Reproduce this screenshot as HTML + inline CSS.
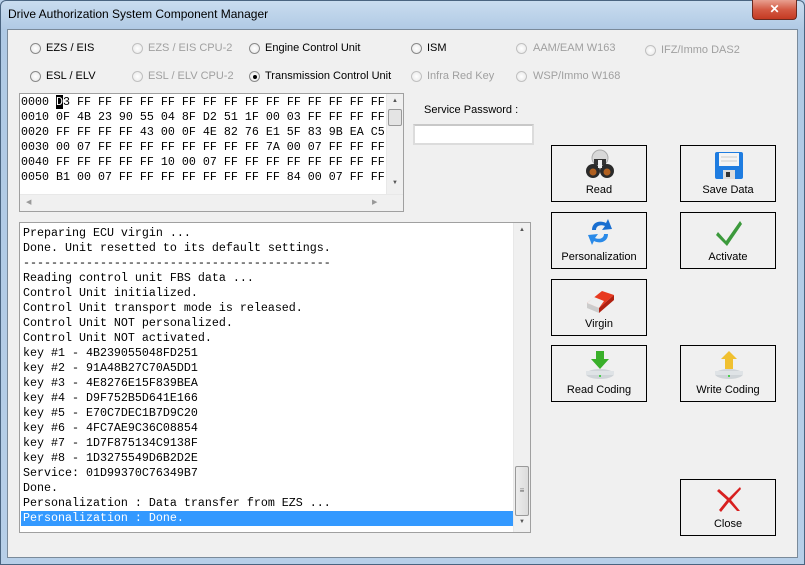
<!DOCTYPE html>
<html><head><meta charset="utf-8"><style>
*{margin:0;padding:0;box-sizing:border-box}
body{width:805px;height:565px;overflow:hidden;background:#b9d1ea;font-family:"Liberation Sans",Tahoma,sans-serif;font-size:11px;color:#000;position:relative}
.frame{position:absolute;left:0;top:0;width:805px;height:565px;background:linear-gradient(180deg,#c9dcef 0,#afc9e4 30px,#b7cfe8 100%);border:1px solid #4a6480;border-radius:6px 6px 0 0}
.title{position:absolute;left:8px;top:7px;font-size:12px;color:#000}
.xbtn{position:absolute;left:752px;top:0;width:45px;height:20px;background:linear-gradient(180deg,#e8a090 0,#d45a44 50%,#c43a22 100%);border:1px solid #6b2a20;border-top:none;border-radius:0 0 4px 4px;color:#fff;font-weight:bold;font-size:12px;text-align:center;line-height:18px}
.client{position:absolute;left:7px;top:29px;width:791px;height:529px;background:#f0f0f0;border:1px solid #7a8a9a}
.rad{position:absolute;width:11px;height:11px;border-radius:50%;border:1px solid #8a8a8a;background:radial-gradient(circle,#fff 0,#e6e6e6 100%)}
.rad.dis{border-color:#c0c0c0}
.rad.on::after{content:"";position:absolute;left:3px;top:3px;width:4px;height:4px;border-radius:50%;background:#000}
.lbl{position:absolute;font-size:11px;white-space:nowrap}
.dis2{color:#a0a0a0}
.mono{font-family:"Liberation Mono","Courier New",monospace;font-size:11.67px;line-height:15px;white-space:pre}
.box{position:absolute;background:#fff;border:1px solid #a0a0a0}
.btn{position:absolute;width:96px;height:57px;border:1px solid #000;background:#f0f0f0;text-align:center}
.btn span{position:absolute;left:0;right:0;top:38px;font-size:11px;color:#000}
.btn svg{position:absolute;left:32px;top:3px}
.sb{position:absolute;background:#f0f0f0}
</style></head><body>
<div class="frame"></div>
<div class="title">Drive Authorization System Component Manager</div>
<div class="xbtn">✕</div>
<div class="client"></div>

<div class="rad" style="left:30px;top:43px"></div><div class="lbl" style="left:46px;top:42px">EZS / EIS</div>
<div class="rad dis" style="left:132px;top:43px"></div><div class="lbl dis2" style="left:148px;top:42px">EZS / EIS CPU-2</div>
<div class="rad" style="left:249px;top:43px"></div><div class="lbl" style="left:265px;top:42px">Engine Control Unit</div>
<div class="rad" style="left:411px;top:43px"></div><div class="lbl" style="left:427px;top:42px">ISM</div>
<div class="rad dis" style="left:516px;top:43px"></div><div class="lbl dis2" style="left:533px;top:42px">AAM/EAM W163</div>
<div class="rad dis" style="left:645px;top:45px"></div><div class="lbl dis2" style="left:661px;top:44px">IFZ/Immo DAS2</div>

<div class="rad" style="left:30px;top:71px"></div><div class="lbl" style="left:46px;top:70px">ESL / ELV</div>
<div class="rad dis" style="left:132px;top:71px"></div><div class="lbl dis2" style="left:148px;top:70px">ESL / ELV CPU-2</div>
<div class="rad on" style="left:249px;top:71px"></div><div class="lbl" style="left:265px;top:70px">Transmission Control Unit</div>
<div class="rad dis" style="left:411px;top:71px"></div><div class="lbl dis2" style="left:427px;top:70px">Infra Red Key</div>
<div class="rad dis" style="left:516px;top:71px"></div><div class="lbl dis2" style="left:533px;top:70px">WSP/Immo W168</div>

<div class="box" style="left:19px;top:93px;width:385px;height:119px;overflow:hidden">
<div class="mono" style="position:absolute;left:1px;top:1px">0000 <span style="background:#000;color:#fff">D</span>3 FF FF FF FF FF FF FF FF FF FF FF FF FF FF FF
0010 0F 4B 23 90 55 04 8F D2 51 1F 00 03 FF FF FF FF
0020 FF FF FF FF 43 00 0F 4E 82 76 E1 5F 83 9B EA C5
0030 00 07 FF FF FF FF FF FF FF FF 7A 00 07 FF FF FF
0040 FF FF FF FF FF 10 00 07 FF FF FF FF FF FF FF FF
0050 B1 00 07 FF FF FF FF FF FF FF FF 84 00 07 FF FF</div>
<div class="sb" style="left:366px;top:0;width:17px;height:100px;border-left:1px solid #e8e8e8"><div style="position:absolute;left:1px;top:15px;width:14px;height:17px;border:1px solid #999;border-radius:2px;background:#e4e4e4"></div><div style="position:absolute;left:5px;top:4px;font-size:6px;color:#555">▲</div><div style="position:absolute;left:5px;top:86px;font-size:6px;color:#555">▼</div></div>
<div class="sb" style="left:0;top:100px;width:383px;height:17px;border-top:1px solid #e8e8e8"><div style="position:absolute;left:6px;top:3px;font-size:7px;color:#999">◀</div><div style="position:absolute;left:352px;top:3px;font-size:7px;color:#999">▶</div></div>
</div>

<div class="lbl" style="left:424px;top:104px">Service Password :</div>
<div class="box" style="left:413px;top:124px;width:121px;height:21px;border:2px solid #dcdcdc;border-top-color:#c8c8c8"></div>

<div class="box" style="left:19px;top:222px;width:512px;height:311px;overflow:hidden">
<div class="mono" style="position:absolute;left:3px;top:3px">Preparing ECU virgin ...
Done. Unit resetted to its default settings.
--------------------------------------------
Reading control unit FBS data ...
Control Unit initialized.
Control Unit transport mode is released.
Control Unit NOT personalized.
Control Unit NOT activated.
key #1 - 4B239055048FD251
key #2 - 91A48B27C70A5DD1
key #3 - 4E8276E15F839BEA
key #4 - D9F752B5D641E166
key #5 - E70C7DEC1B7D9C20
key #6 - 4FC7AE9C36C08854
key #7 - 1D7F875134C9138F
key #8 - 1D3275549D6B2D2E
Service: 01D99370C76349B7
Done.
Personalization : Data transfer from EZS ...</div>
<div class="mono" style="position:absolute;left:1px;top:288px;width:492px;height:15px;background:#3399ff;color:#fff;padding-left:2px">Personalization : Done.</div>
<div class="sb" style="left:493px;top:0;width:17px;height:309px;border-left:1px solid #e8e8e8"><div style="position:absolute;left:5px;top:4px;font-size:6px;color:#555">▲</div><div style="position:absolute;left:1px;top:243px;width:14px;height:50px;border:1px solid #999;border-radius:2px;background:linear-gradient(90deg,#ececec,#dcdcdc);font-size:8px;text-align:center;line-height:48px;color:#666">≡</div><div style="position:absolute;left:5px;top:296px;font-size:6px;color:#555">▼</div></div>
</div>

<div class="btn" style="left:551px;top:145px"><svg width="32" height="32" viewBox="0 0 32 32"><circle cx="16" cy="9" r="8" fill="#d8d8d8" stroke="#aaa"/><rect x="10" y="10" width="12" height="6" fill="#333"/><circle cx="9" cy="22" r="7" fill="#2a2a2a"/><circle cx="23" cy="22" r="7" fill="#2a2a2a"/><circle cx="9" cy="23" r="3.5" fill="#b06020"/><circle cx="23" cy="23" r="3.5" fill="#b06020"/><rect x="14" y="11" width="4" height="8" fill="#eee"/></svg><span>Read</span></div>
<div class="btn" style="left:680px;top:145px"><svg width="32" height="32" viewBox="0 0 32 32"><rect x="2" y="3" width="28" height="27" rx="2" fill="#1e7ce0"/><rect x="6" y="4" width="20" height="13" fill="#f4f4f4"/><line x1="8" y1="8" x2="24" y2="8" stroke="#ccc"/><line x1="8" y1="12" x2="24" y2="12" stroke="#ccc"/><rect x="10" y="21" width="12" height="9" fill="#ddd"/><rect x="13" y="23" width="4" height="5" fill="#333"/></svg><span>Save Data</span></div>
<div class="btn" style="left:551px;top:212px"><svg width="32" height="32" viewBox="0 0 32 32"><path d="M8 14 C8 6 16 4 22 7 L24 3 L28 13 L18 14 L21 10 C16 8 12 10 12 14 Z" fill="#1a6fd0"/><path d="M24 18 C24 26 16 28 10 25 L8 29 L4 19 L14 18 L11 22 C16 24 20 22 20 18 Z" fill="#2a8ae8"/></svg><span>Personalization</span></div>
<div class="btn" style="left:680px;top:212px"><svg width="32" height="32" viewBox="0 0 32 32"><path d="M5 16 L13 25 L27 5 L29 8 L14 30 L3 19 Z" fill="#3c9a3c"/></svg><span>Activate</span></div>
<div class="btn" style="left:551px;top:279px"><svg width="32" height="32" viewBox="0 0 32 32"><path d="M3 20 L18 8 L30 12 L15 25 Z" fill="#e83a20"/><path d="M3 20 L15 25 L15 30 L3 25 Z" fill="#ccc"/><path d="M15 25 L30 12 L30 17 L15 30 Z" fill="#b02010"/><path d="M3 20 L10 14 L20 18 L15 25 Z" fill="#eee"/></svg><span>Virgin</span></div>
<div class="btn" style="left:551px;top:345px"><svg width="32" height="32" viewBox="0 0 32 32"><ellipse cx="16" cy="25" rx="14" ry="5" fill="#cfd4d8"/><rect x="2" y="22" width="28" height="4" fill="#dfe3e6"/><path d="M12 2 L20 2 L20 10 L25 10 L16 20 L7 10 L12 10 Z" fill="#3ab02a"/><circle cx="16" cy="27" r="1" fill="#2c2"/></svg><span>Read Coding</span></div>
<div class="btn" style="left:680px;top:345px"><svg width="32" height="32" viewBox="0 0 32 32"><ellipse cx="16" cy="25" rx="14" ry="5" fill="#cfd4d8"/><rect x="2" y="22" width="28" height="4" fill="#dfe3e6"/><path d="M12 20 L12 10 L8 10 L16 2 L24 10 L20 10 L20 20 Z" fill="#f0c030"/><circle cx="16" cy="27" r="1" fill="#2c2"/></svg><span>Write Coding</span></div>
<div class="btn" style="left:680px;top:479px"><svg width="32" height="32" viewBox="0 0 32 32"><path d="M6 6 L16 15 L27 4 L28 6 L18 17 L27 28 L24 28 L16 19 L8 29 L6 27 L14 17 L4 8 Z" fill="#d82020"/></svg><span>Close</span></div>
</body></html>
